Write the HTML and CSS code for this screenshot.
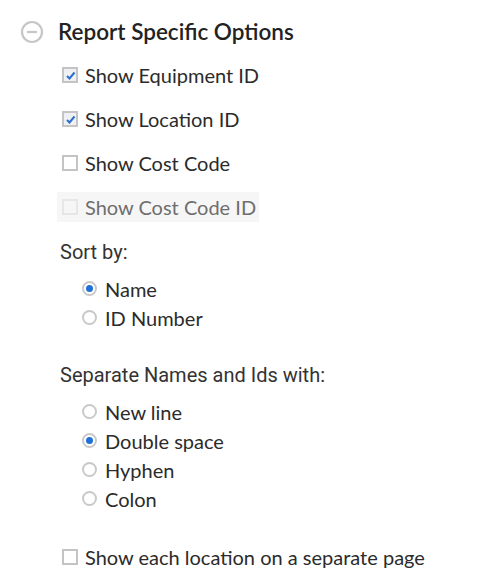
FILE: index.html
```html
<!DOCTYPE html>
<html>
<head>
<meta charset="utf-8">
<link rel="stylesheet" href="styles.css">
</head>
<body>
<div class="panel">
  <div class="header">
    <svg class="collapse-icon" width="24" height="24" viewBox="0 0 24 24">
      <circle cx="12" cy="12" r="10" fill="none" stroke="#c6c6c6" stroke-width="2.2"/>
      <line x1="7" y1="12" x2="17" y2="12" stroke="#c6c6c6" stroke-width="2.2"/>
    </svg>
    <span class="title">Report Specific Options</span>
  </div>

  <div class="checks">
    <label class="check-row"><span class="box checked"><svg width="11" height="11" viewBox="0 0 11 11"><path d="M2 6 L4.5 8.5 L9.5 2.5" fill="none" stroke="#2a6fd0" stroke-width="2"/></svg></span>Show Equipment ID</label>
    <label class="check-row"><span class="box checked"><svg width="11" height="11" viewBox="0 0 11 11"><path d="M2 6 L4.5 8.5 L9.5 2.5" fill="none" stroke="#2a6fd0" stroke-width="2"/></svg></span>Show Location ID</label>
    <label class="check-row"><span class="box"></span>Show Cost Code</label>
    <label class="check-row disabled"><span class="box"></span>Show Cost Code ID</label>
  </div>

  <div class="group-label sort">Sort by:</div>
  <div class="radios">
    <label class="radio-row"><span class="radio on"></span>Name</label>
    <label class="radio-row"><span class="radio"></span>ID Number</label>
  </div>

  <div class="group-label sep">Separate Names and Ids with:</div>
  <div class="radios">
    <label class="radio-row"><span class="radio"></span>New line</label>
    <label class="radio-row"><span class="radio on"></span>Double space</label>
    <label class="radio-row"><span class="radio"></span>Hyphen</label>
    <label class="radio-row"><span class="radio"></span>Colon</label>
  </div>

  <div class="checks last">
    <label class="check-row"><span class="box"></span>Show each location on a separate page</label>
  </div>
</div>
</body>
</html>
```

FILE: styles.css
```css
html, body {
  margin: 0;
  padding: 0;
  background: #ffffff;
}

.panel {
  font-family: Lato, "Open Sans", sans-serif;
  color: #2b2b2b;
}

.header {
  display: flex;
  align-items: center;
  height: 43px;
  padding-top: 10px;
  padding-left: 20px;
  gap: 14px;
}

.title {
  font-size: 22.5px;
  font-weight: 600;
  color: #222;
}

.checks {
  display: flex;
  flex-direction: column;
  align-items: flex-start;
  padding-left: 57px;
}

.check-row {
  display: flex;
  align-items: center;
  height: 30px;
  margin: 7px 0;
  padding: 0 3px 0 5px;
  font-size: 20px;
  color: #2b2b2b;
}

.check-row.disabled {
  background: #f6f6f6;
  color: #6e6e6e;
}

.box {
  width: 12px;
  height: 12px;
  border: 2px solid #c4c4c4;
  background: #fff;
  margin-right: 7px;
  display: flex;
  align-items: center;
  justify-content: center;
  flex: none;
}

.box.checked {
  background: #eef0f3;
}

.disabled .box {
  border-color: #e6e6e6;
  background: #f6f6f6;
}

.group-label {
  font-family: Roboto, sans-serif;
  font-size: 20px;
  color: #333;
  padding-left: 60px;
  height: 24px;
  line-height: 24px;
}

.sort {
  margin-top: 11px;
}

.sep {
  margin-top: 31px;
}

.radios {
  display: flex;
  flex-direction: column;
  padding-left: 82px;
  margin-top: 10px;
}

.radio-row {
  display: flex;
  align-items: center;
  height: 29px;
  font-size: 20px;
  color: #2b2b2b;
}

.radio {
  width: 11px;
  height: 11px;
  border-radius: 50%;
  border: 2px solid #c9c9c9;
  background: #fff;
  margin-right: 8px;
  display: flex;
  align-items: center;
  justify-content: center;
  flex: none;
}

.radio.on::after {
  content: "";
  width: 7px;
  height: 7px;
  border-radius: 50%;
  background: #1f6fd6;
}

.checks.last {
  margin-top: 22px;
}
```
